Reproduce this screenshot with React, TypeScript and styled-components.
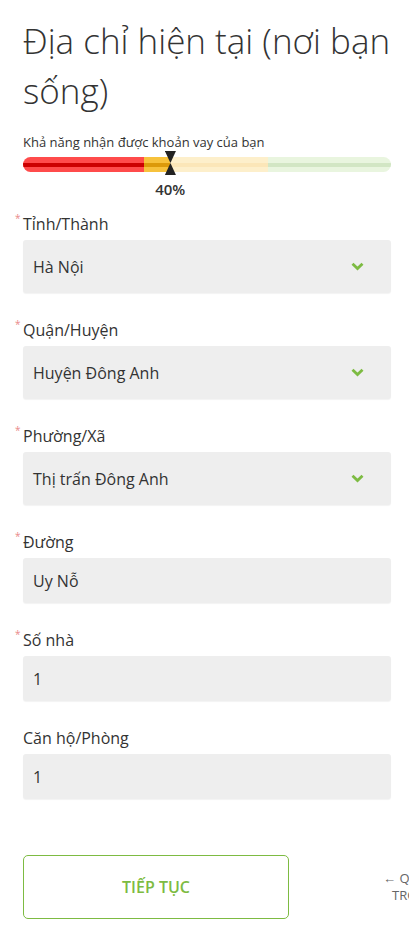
import React from 'react';
import styled, { createGlobalStyle, css } from 'styled-components';

const GREEN = '#7dbb42';

const GlobalStyle = createGlobalStyle`
  html, body {
    margin: 0;
    padding: 0;
    background: #fff;
    overflow: hidden;
  }
  body {
    font-family: 'Open Sans', 'Noto Sans', sans-serif;
    color: #333;
  }
`;

const Page = styled.div`
  width: 409px;
  padding: 16px 18px 0 23px;
  box-sizing: border-box;
`;

const Title = styled.h1`
  margin: 0;
  font-weight: 300;
  font-size: 35px;
  line-height: 50px;
  color: #333;
  white-space: nowrap;
`;

const Meter = styled.div`
  margin-top: 18px;
  width: 368px;
`;

const MeterLabel = styled.div`
  font-size: 13px;
  line-height: 17px;
  color: #333;
`;

const Track = styled.div`
  position: relative;
  display: flex;
  height: 15px;
  margin-top: 6px;
  border-radius: 8px;
  overflow: hidden;
`;

const Segment = styled.div<{ $width: number; $bg: string; $stripe: string }>`
  ${({ $width, $bg, $stripe }) => css`
    width: ${$width}%;
    background: ${$bg};
    display: flex;
    align-items: center;
    &::after {
      content: '';
      display: block;
      width: 100%;
      height: 4px;
      background: ${$stripe};
    }
  `}
`;

const MarkerRow = styled.div`
  position: relative;
  height: 0;
`;

const Marker = styled.div<{ $left: number }>`
  position: absolute;
  top: -21px;
  left: ${({ $left }) => $left}%;
  transform: translateX(-50%);
  display: flex;
  flex-direction: column;
  align-items: center;
`;

const Percent = styled.div`
  margin-top: 5px;
  font-size: 15px;
  font-weight: 600;
  line-height: 18px;
  color: #333;
`;

const Form = styled.div`
  margin-top: 41px;
  display: flex;
  flex-direction: column;
  width: 368px;
`;

const Field = styled.div<{ $gap: number }>`
  margin-bottom: ${({ $gap }) => $gap}px;
`;

const Label = styled.div`
  position: relative;
  font-size: 16px;
  line-height: 22px;
  color: #333;
  margin-bottom: 5px;
`;

const Req = styled.span`
  position: absolute;
  left: -8px;
  top: -1px;
  font-size: 10px;
  line-height: 12px;
  color: #e98a8a;
`;

const Box = styled.div<{ $height: number }>`
  display: flex;
  align-items: center;
  justify-content: space-between;
  height: ${({ $height }) => $height}px;
  padding: 0 27px 0 10px;
  background: #eeeeee;
  border-radius: 3px;
  box-shadow: 0 1px 1px rgba(0, 0, 0, 0.05);
  font-size: 16px;
  color: #333;
  box-sizing: border-box;
`;

const Actions = styled.div`
  margin-top: 30px;
  display: flex;
  align-items: center;
  gap: 94px;
  white-space: nowrap;
`;

const Button = styled.button`
  width: 266px;
  height: 64px;
  background: #fff;
  border: 1px solid ${GREEN};
  border-radius: 5px;
  color: ${GREEN};
  font-family: 'Open Sans', sans-serif;
  font-size: 16px;
  font-weight: 600;
  flex-shrink: 0;
`;

const Back = styled.div`
  display: flex;
  flex-direction: column;
  align-items: center;
  font-size: 13px;
  line-height: 17px;
  color: #666;
  flex-shrink: 0;
`;

const Chevron = () => (
  <svg width="13" height="9" viewBox="0 0 13 9">
    <path d="M1.5 1.8 L6.5 6.6 L11.5 1.8" fill="none" stroke={GREEN} strokeWidth="2.8" />
  </svg>
);

const Tri = ({ up }: { up?: boolean }) => (
  <svg width="11" height="12" viewBox="0 0 11 12" style={{ display: 'block' }}>
    <path d={up ? 'M5.5 0 L11 12 L0 12 Z' : 'M0 0 L11 0 L5.5 12 Z'} fill="#222" />
  </svg>
);

const fields = [
  { label: 'Tỉnh/Thành', value: 'Hà Nội', select: true, req: true },
  { label: 'Quận/Huyện', value: 'Huyện Đông Anh', select: true, req: true },
  { label: 'Phường/Xã', value: 'Thị trấn Đông Anh', select: true, req: true },
  { label: 'Đường', value: 'Uy Nỗ', select: false, req: true },
  { label: 'Số nhà', value: '1', select: false, req: true },
  { label: 'Căn hộ/Phòng', value: '1', select: false, req: false },
];

export default function App() {
  return (
    <Page>
      <GlobalStyle />
      <Title>
        Địa chỉ hiện tại (nơi bạn
        <br />
        sống)
      </Title>
      <Meter>
        <MeterLabel>Khả năng nhận được khoản vay của bạn</MeterLabel>
        <Track>
          <Segment $width={33} $bg="#ff4b4b" $stripe="#cc0000" />
          <Segment $width={7} $bg="#f7c23c" $stripe="#dc9a0a" />
          <Segment $width={26.5} $bg="#fdefcb" $stripe="#fbe6b8" />
          <Segment $width={33.5} $bg="#e9f5df" $stripe="#d2e6c4" />
        </Track>
        <MarkerRow>
          <Marker $left={40}>
            <Tri />
            <Tri up />
            <Percent>40%</Percent>
          </Marker>
        </MarkerRow>
      </Meter>
      <Form>
        {fields.map((f) => (
          <Field key={f.label} $gap={f.select ? 26 : 26}>
            <Label>
              {f.req && <Req>*</Req>}
              {f.label}
            </Label>
            <Box $height={f.select ? 53 : 45}>
              <span>{f.value}</span>
              {f.select && <Chevron />}
            </Box>
          </Field>
        ))}
      </Form>
      <Actions>
        <Button>TIẾP TỤC</Button>
        <Back>
          <span>← Quay lại</span>
          <span>TRỞ LẠI</span>
        </Back>
      </Actions>
    </Page>
  );
}
